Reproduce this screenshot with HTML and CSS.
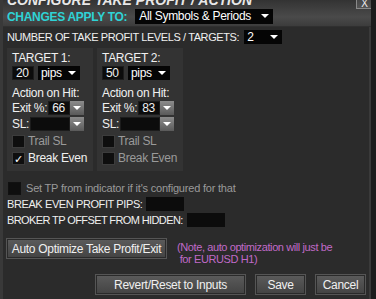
FILE: index.html
```html
<!DOCTYPE html>
<html lang="en">
<head>
    <meta charset="UTF-8">
    <title>Configure Take Profit / Action</title>
    <link rel="stylesheet" href="styles.css">
</head>
<body>
    <div class="window">
        <div class="titlebar">
            <div class="title">CONFIGURE TAKE PROFIT / ACTION</div>
            <div class="apply-row">
                <span class="apply-label">CHANGES APPLY TO:</span>
                <div class="dropdown apply-select">All Symbols &amp; Periods<span class="caret"></span></div>
            </div>
            <button class="close-btn">X</button>
        </div>

        <div class="content">
            <div class="levels-row">
                <span>NUMBER OF TAKE PROFIT LEVELS / TARGETS:</span>
                <div class="dropdown levels-select">2<span class="caret"></span></div>
            </div>

            <div class="targets">
                <div class="target">
                    <div class="target-title">TARGET 1:</div>
                    <div class="field-row">
                        <div class="box num">20</div>
                        <div class="dropdown unit">pips<span class="caret"></span></div>
                    </div>
                    <div class="target-sub">Action on Hit:</div>
                    <div class="field-row">
                        <span class="lbl">Exit %:</span>
                        <div class="box combo">66</div>
                        <div class="arrow-btn"><span class="caret"></span></div>
                    </div>
                    <div class="field-row">
                        <span class="lbl">SL:</span>
                        <div class="box combo"></div>
                        <div class="arrow-btn"><span class="caret"></span></div>
                    </div>
                    <div class="check-row disabled"><span class="check"></span>Trail SL</div>
                    <div class="check-row"><span class="check">&#10003;</span>Break Even</div>
                </div>
                <div class="target">
                    <div class="target-title">TARGET 2:</div>
                    <div class="field-row">
                        <div class="box num">50</div>
                        <div class="dropdown unit">pips<span class="caret"></span></div>
                    </div>
                    <div class="target-sub">Action on Hit:</div>
                    <div class="field-row">
                        <span class="lbl">Exit %:</span>
                        <div class="box combo">83</div>
                        <div class="arrow-btn"><span class="caret"></span></div>
                    </div>
                    <div class="field-row">
                        <span class="lbl">SL:</span>
                        <div class="box combo"></div>
                        <div class="arrow-btn"><span class="caret"></span></div>
                    </div>
                    <div class="check-row disabled"><span class="check"></span>Trail SL</div>
                    <div class="check-row disabled"><span class="check"></span>Break Even</div>
                </div>
            </div>

            <div class="check-row disabled indicator-row"><span class="check"></span>Set TP from indicator if it's configured for that</div>
            <div class="input-row">BREAK EVEN PROFIT PIPS: <div class="box pips"></div></div>
            <div class="input-row tight">BROKER TP OFFSET FROM HIDDEN: <div class="box pips"></div></div>

            <div class="optimize-row">
                <button class="btn optimize-btn">Auto Optimize Take Profit/Exit</button>
                <div class="note">(Note, auto optimization will just be<br>&nbsp;for EURUSD H1)</div>
            </div>

            <div class="actions">
                <button class="btn revert-btn">Revert/Reset to Inputs</button>
                <button class="btn small-btn">Save</button>
                <button class="btn small-btn">Cancel</button>
            </div>
        </div>
    </div>
</body>
</html>
```

FILE: styles.css
```css
body {
    margin: 0;
    padding: 0;
    background-color: #1e1e1e;
    font-family: "Liberation Sans", Arial, sans-serif;
    font-size: 11px;
    letter-spacing: -0.4px;
    color: #f0f0f0;
}
.window {
    width: 376px;
    height: 299px;
    background-color: #2b2b2b;
    overflow: hidden;
    box-sizing: border-box;
    border-left: 3px solid #393939;
    border-right: 5px solid #1c1c1c;
    box-shadow: inset -2px 0 0 #3a3a3a;
}
.titlebar {
    position: relative;
    height: 27px;
    background: linear-gradient(#333333, #4a4a4a 65%, #3c3c3c);
    border-bottom: 1px solid #303030;
    box-sizing: border-box;
}
.title {
    position: absolute;
    top: -8px;
    left: 4px;
    font-weight: bold;
    font-style: italic;
    font-size: 14px;
    letter-spacing: 0;
    color: #e8e8e8;
}
.apply-row {
    display: flex;
    align-items: center;
    padding: 9px 0 0 4px;
}
.apply-label {
    color: #2ed3d6;
    font-weight: bold;
    font-size: 12px;
    letter-spacing: -0.3px;
    margin-right: 8px;
}
.dropdown {
    position: relative;
    background-color: #050505;
    color: #fff;
    height: 14px;
    line-height: 14px;
    padding-left: 3px;
    box-sizing: border-box;
    font-size: 12px;
    letter-spacing: -0.3px;
}
.caret {
    position: absolute;
    right: 4px;
    top: 5px;
    width: 0;
    height: 0;
    border-left: 4px solid transparent;
    border-right: 4px solid transparent;
    border-top: 4px solid #fff;
}
.apply-select {
    width: 138px;
    height: 15px;
    line-height: 15px;
    padding-left: 4px;
}
.close-btn {
    position: absolute;
    top: -7px;
    right: -2px;
    width: 17px;
    height: 16px;
    padding: 0;
    background: linear-gradient(#3a3a3a, #555555);
    border: 1px solid #8a8a8a;
    color: #eee;
    font-family: "Liberation Sans", Arial, sans-serif;
    font-size: 10px;
    line-height: 19px;
}
.content {
    padding: 2px 4px 0 4px;
}
.levels-row {
    display: flex;
    align-items: center;
    height: 16px;
    gap: 5px;
}
.levels-select {
    width: 38px;
}
.targets {
    display: flex;
    gap: 4px;
    margin-top: 3px;
}
.target {
    width: 86px;
    height: 123px;
    background-color: #333333;
    padding: 4px 9px 0 5px;
    box-sizing: border-box;
}
.target-title {
    height: 13px;
    line-height: 13px;
    font-size: 12px;
    letter-spacing: -0.3px;
}
.target-sub {
    height: 14px;
    line-height: 14px;
    margin-top: 6px;
    font-size: 12px;
    letter-spacing: -0.3px;
}
.field-row {
    display: flex;
    align-items: center;
    height: 14px;
    margin-top: 1px;
    margin-bottom: 2px;
    font-size: 12px;
    letter-spacing: -0.3px;
}
.box {
    background-color: #0c0c0c;
    height: 14px;
    line-height: 13px;
    box-sizing: border-box;
    border: 1px solid #1c1c1c;
    padding-left: 3px;
}
.num {
    width: 22px;
    margin-right: 4px;
}
.unit {
    width: 42px;
}
.lbl {
    margin-right: 1px;
}
.combo {
    flex: 1;
}
.arrow-btn {
    position: relative;
    width: 14px;
    height: 14px;
    background: linear-gradient(#8c8c8c, #5a5a5a);
}
.arrow-btn .caret {
    right: 3px;
    top: 5px;
}
.check-row {
    display: flex;
    align-items: center;
    height: 14px;
    margin-top: 3px;
    font-size: 12px;
    letter-spacing: -0.3px;
    white-space: nowrap;
}
.check {
    flex: none;
    width: 13px;
    height: 13px;
    background-color: #0e0e0e;
    border: 1px solid #3c3c3c;
    box-sizing: border-box;
    margin-right: 3px;
    color: #fff;
    font-size: 11px;
    line-height: 12px;
    text-align: center;
}
.disabled {
    color: #9a9a9a;
}
.indicator-row {
    margin-top: 10px;
    margin-left: 1px;
    font-size: 11px;
    letter-spacing: -0.2px;
}
.indicator-row .check {
    border-color: #111;
    margin-right: 5px;
}
.input-row {
    display: flex;
    align-items: center;
    height: 14px;
    gap: 4px;
    margin-top: 2px;
}
.input-row.tight {
    letter-spacing: -0.6px;
}
.pips {
    width: 38px;
    height: 14px;
    border: none;
}
.optimize-row {
    display: flex;
    margin-top: 12px;
    gap: 11px;
}
.btn {
    font-family: "Liberation Sans", Arial, sans-serif;
    font-size: 12px;
    letter-spacing: -0.3px;
    color: #f0f0f0;
    background: linear-gradient(#5a5a5a, #444444);
    border: 1px solid #2a2a2a;
    outline: 1px solid #555;
    height: 19px;
    padding: 0;
    white-space: nowrap;
}
.optimize-btn {
    width: 159px;
}
.note {
    color: #c06ac8;
    line-height: 12px;
    padding-top: 2px;
}
.actions {
    display: flex;
    justify-content: flex-end;
    gap: 11px;
    margin-top: 10px;
    padding-right: 2px;
}
.revert-btn {
    width: 149px;
}
.small-btn {
    width: 49px;
}
```
